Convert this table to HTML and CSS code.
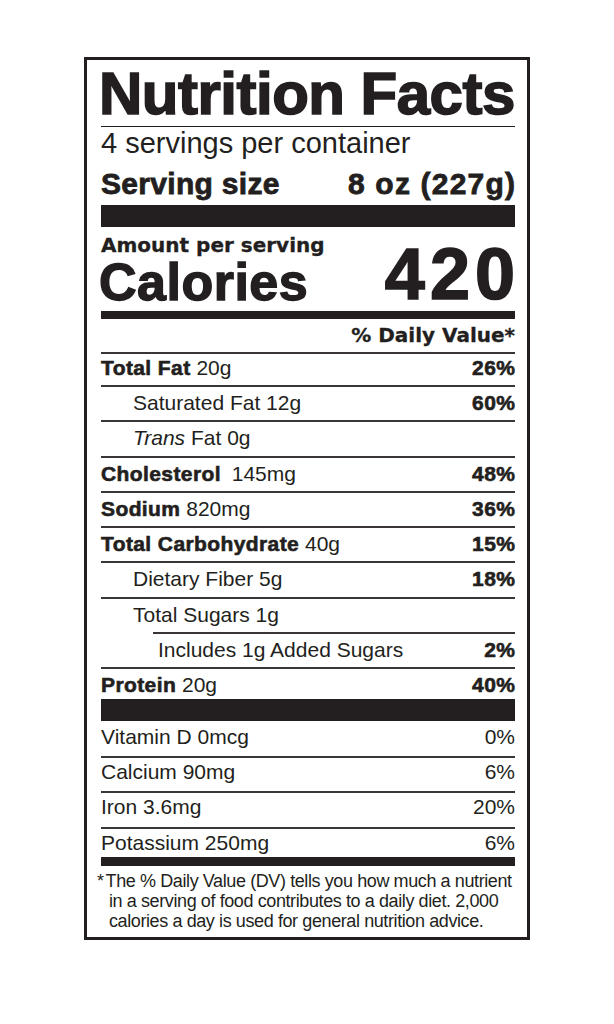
FILE: index.html
```html
<!DOCTYPE html>
<html lang="en">
<head>
<meta charset="utf-8">
<title>Nutrition Facts</title>
<link rel="stylesheet" href="styles.css">
</head>
<body>
<section class="label">
  <h1 class="title">Nutrition Facts</h1>
  <p class="servings">4 servings per container</p>
  <div class="serving-size"><span class="ss-label">Serving size</span><span class="ss-value">8 oz (227g)</span></div>
  <div class="bar bar-thick"></div>
  <div class="cal-block">
    <div class="cal-left">
      <div class="amount">Amount per serving</div>
      <div class="calories">Calories</div>
    </div>
    <div class="cal-num">420</div>
  </div>
  <div class="bar bar-med"></div>
  <div class="dv-head">% Daily Value*</div>
  <div class="nutrients">
    <div class="row row-first"><span class="name"><b>Total Fat</b> 20g</span><b class="pct">26%</b></div>
    <div class="row indent"><span class="name">Saturated Fat 12g</span><b class="pct">60%</b></div>
    <div class="row indent"><span class="name"><i>Trans</i> Fat 0g</span></div>
    <div class="row"><span class="name"><b class="wide">Cholesterol</b> 145mg</span><b class="pct">48%</b></div>
    <div class="row"><span class="name"><b>Sodium</b> 820mg</span><b class="pct">36%</b></div>
    <div class="row"><span class="name"><b>Total Carbohydrate</b> 40g</span><b class="pct">15%</b></div>
    <div class="row indent"><span class="name">Dietary Fiber 5g</span><b class="pct">18%</b></div>
    <div class="row indent"><span class="name">Total Sugars 1g</span></div>
    <div class="row added"><span class="name">Includes 1g Added Sugars</span><b class="pct">2%</b></div>
    <div class="row protein"><span class="name"><b>Protein</b> 20g</span><b class="pct">40%</b></div>
  </div>
  <div class="bar bar-thick"></div>
  <div class="vitamins">
    <div class="vrow v1"><span>Vitamin D 0mcg</span><span>0%</span></div>
    <div class="vrow v2"><span>Calcium 90mg</span><span>6%</span></div>
    <div class="vrow v3"><span>Iron 3.6mg</span><span>20%</span></div>
    <div class="vrow v4"><span>Potassium 250mg</span><span>6%</span></div>
  </div>
  <div class="bar bar-med2"></div>
  <p class="footnote"><span class="star">*</span>The % Daily Value (DV) tells you how much a nutrient<br>in a serving of food contributes to a daily diet. 2,000<br>calories a day is used for general nutrition advice.</p>
</section>
</body>
</html>
```

FILE: styles.css
```css
body {
  margin: 0;
  background: #ffffff;
  color: #231f20;
  font-family: "Liberation Sans", Arial, sans-serif;
}

.label {
  box-sizing: border-box;
  width: 446px;
  margin: 57px 0 0 84px;
  border: 3px solid #231f20;
  padding: 0 12px 0 14px;
}

.title {
  margin: 0;
  padding-top: 2px;
  height: 64px;
  line-height: 64px;
  font-size: 60px;
  font-weight: 700;
  letter-spacing: -0.5px;
  text-indent: -2px;
  -webkit-text-stroke: 1.6px #231f20;
  border-bottom: 1px solid #231f20;
  white-space: nowrap;
}

.servings {
  margin: 0;
  font-size: 29px;
  line-height: 32px;
}

.serving-size {
  display: flex;
  justify-content: space-between;
  padding-top: 4px;
  font-size: 30px;
  line-height: 42px;
  font-weight: 700;
  -webkit-text-stroke: 0.8px #231f20;
}

.ss-label {
  letter-spacing: 0.3px;
}

.ss-value {
  letter-spacing: 1.2px;
  margin-right: -1.2px;
}

.bar {
  background: #231f20;
}

.bar-thick {
  height: 22px;
}

.bar-med {
  height: 8px;
  margin-top: 4px;
}

.bar-med2 {
  height: 9px;
}

.cal-block {
  display: flex;
  justify-content: space-between;
  align-items: flex-end;
  padding-top: 6px;
  font-weight: 700;
}

.amount {
  font-family: "DejaVu Sans", "Liberation Sans", sans-serif;
  font-size: 20px;
  line-height: 24px;
  -webkit-text-stroke: 0.3px #231f20;
  white-space: nowrap;
}

.calories {
  font-size: 52px;
  line-height: 50px;
  letter-spacing: 0.5px;
  text-indent: -2px;
  -webkit-text-stroke: 1.4px #231f20;
}

.cal-num {
  font-size: 72px;
  line-height: 66px;
  letter-spacing: 5px;
  margin-right: -5px;
  -webkit-text-stroke: 1.6px #231f20;
}

.dv-head {
  text-align: right;
  font-family: "DejaVu Sans", "Liberation Sans", sans-serif;
  font-size: 20px;
  line-height: 33px;
  font-weight: 700;
  -webkit-text-stroke: 0.3px #231f20;
}

.row {
  box-sizing: border-box;
  display: flex;
  justify-content: space-between;
  align-items: baseline;
  height: 35.3px;
  line-height: 31px;
  border-top: 2px solid #3a3637;
  font-size: 21px;
  white-space: nowrap;
}

.row-first {
  height: 33px;
  line-height: 27px;
}

.row.protein {
  height: 32px;
}

.row b {
  font-weight: 700;
  letter-spacing: 0.4px;
  -webkit-text-stroke: 0.6px #231f20;
}

.row b.wide {
  margin-right: 5px;
}

.row .pct {
  letter-spacing: 0.5px;
  margin-right: -0.5px;
}

.indent .name {
  padding-left: 32px;
}

.row.added {
  margin-left: 52px;
  padding-left: 5px;
}

.vrow {
  box-sizing: border-box;
  display: flex;
  justify-content: space-between;
  font-size: 21px;
  line-height: 28px;
  border-top: 2px solid #3a3637;
  white-space: nowrap;
}

.vrow.v1 {
  border-top: 0;
  height: 34.6px;
  line-height: 32.6px;
}

.vrow.v2 {
  height: 35px;
}

.vrow.v3 {
  height: 35.7px;
}

.vrow.v4 {
  height: 30px;
}

.footnote {
  margin: 0;
  padding: 5px 0 6.3px 8px;
  text-indent: -12px;
  font-size: 18px;
  line-height: 20px;
  letter-spacing: -0.4px;
  white-space: nowrap;
}

.star {
  margin-right: 2px;
}
```
